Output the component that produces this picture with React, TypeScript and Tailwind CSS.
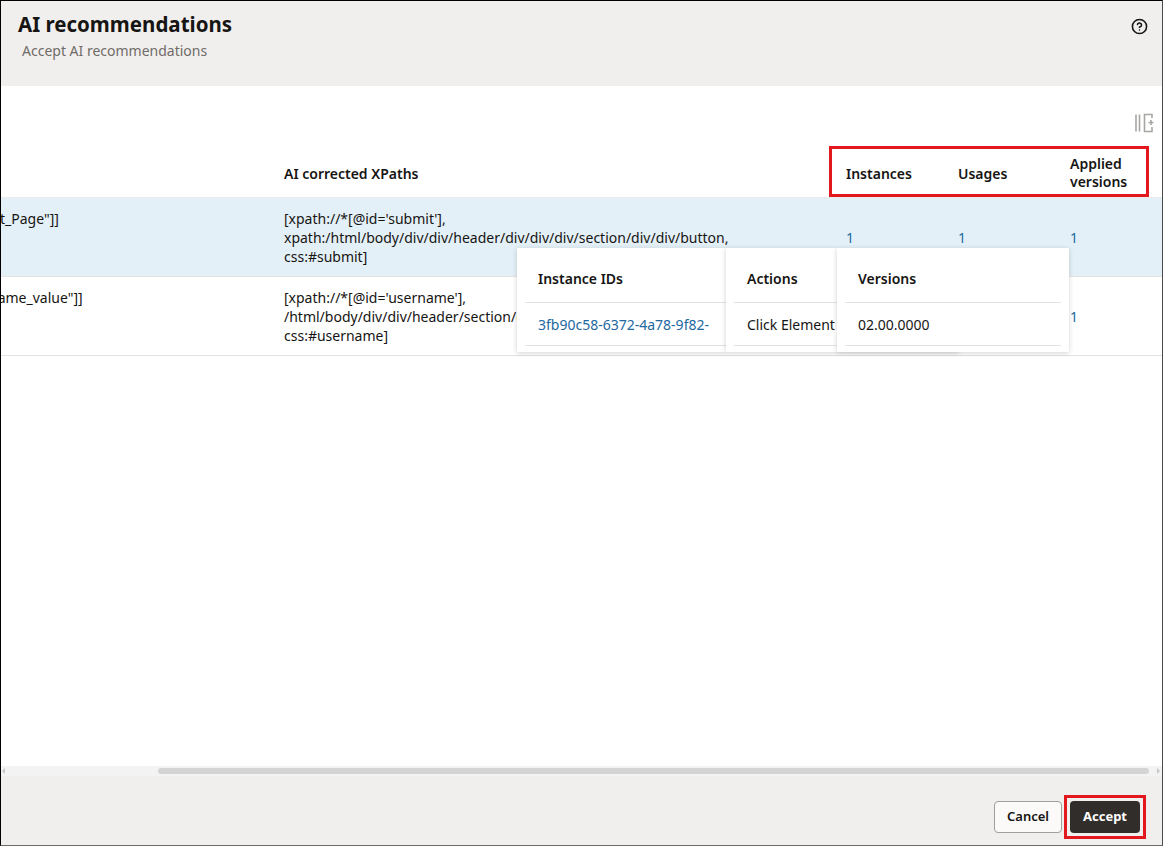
import { CircleHelp } from 'lucide-react'

interface Row {
  original: string
  originalOffset: string
  corrected: string[]
  instances: number
  usages: number
  versions: number
  selected?: boolean
}

const rows: Row[] = [
  {
    original: 't_Page"]]',
    originalOffset: 'ml-[-1px]',
    corrected: [
      "[xpath://*[@id='submit'],",
      'xpath:/html/body/div/div/header/div/div/div/section/div/div/button,',
      'css:#submit]',
    ],
    instances: 1,
    usages: 1,
    versions: 1,
    selected: true,
  },
  {
    original: 'name_value"]]',
    originalOffset: 'ml-[-12px]',
    corrected: [
      "[xpath://*[@id='username'],",
      '/html/body/div/div/header/section/div/div/form/input,',
      'css:#username]',
    ],
    instances: 1,
    usages: 1,
    versions: 1,
  },
]

function ColumnsIcon() {
  return (
    <svg width="22" height="20" viewBox="0 0 22 20" fill="none" stroke="#a8a6a3" strokeWidth={1.6}>
      <path d="M2 1.5v17M5.5 1.5v17" />
      <path d="M18 5V1.5H10.5v17H18V14" />
      <path d="M14.5 9.5h5M17 7v5" />
    </svg>
  )
}

function Popup({ title, value, link, className }: { title: string; value: string; link?: boolean; className: string }) {
  return (
    <div className={`absolute top-[162px] h-[104px] bg-white pl-2 overflow-hidden shadow-[0_1px_5px_rgba(0,0,0,0.18)] ${className}`}>
      <div className="h-[55px] flex items-center px-[13px] pt-[6px] border-b border-[#e4e3e1] text-[14px] font-semibold text-[#161513] whitespace-nowrap">
        {title}
      </div>
      <div
        className={`h-[43px] flex items-center px-[13px] border-b border-[#e4e3e1] text-[14px] whitespace-nowrap overflow-hidden ${
          link ? 'text-[#22689f]' : 'text-[#161513]'
        }`}
      >
        {value}
      </div>
    </div>
  )
}

export default function App() {
  return (
    <div
      className="w-[1163px] h-[846px] flex flex-col border-l border-t border-black border-r border-r-[#4a4a4a] border-b border-b-[#6b6b6b] overflow-hidden text-[#161513]"
      style={{ fontFamily: '"Noto Sans", "Open Sans", sans-serif' }}
    >
      {/* Header */}
      <div className="h-[85px] shrink-0 bg-[#f1efed] flex justify-between pl-[17px] pr-[14px]">
        <div className="pt-[9px]">
          <h1 className="text-[20.5px] leading-[28px] font-bold text-[#161513]">AI recommendations</h1>
          <p className="mt-[3px] ml-[4px] text-[14px] leading-[20px] text-[#6f6c69]">Accept AI recommendations</p>
        </div>
        <div className="pt-[17px]">
          <CircleHelp size={17} strokeWidth={2.2} className="text-[#161513]" />
        </div>
      </div>

      {/* Body */}
      <div className="h-[680px] shrink-0 bg-white relative overflow-hidden">
        <div className="h-[62px] flex justify-end items-start pt-[27px] pr-[6px]">
          <ColumnsIcon />
        </div>

        {/* Table header */}
        <div className="grid grid-cols-[283px_562px_112px_112px_1fr] h-[50px] items-center text-[14px] font-semibold leading-[18px] border-b border-[#ecebea]">
          <div />
          <div className="pt-[2px]">AI corrected XPaths</div>
          <div className="pt-[2px]">Instances</div>
          <div className="pt-[2px]">Usages</div>
          <div className="pt-[1px]">
            Applied
            <br />
            versions
          </div>
        </div>

        {/* Rows */}
        {rows.map((r, i) => (
          <div
            key={i}
            className={`grid grid-cols-[283px_562px_112px_112px_1fr] h-[79px] border-b border-[#e4e3e1] text-[14px] leading-[19px] ${
              r.selected ? 'bg-[#e4f0f7]' : 'bg-white'
            }`}
          >
            <div className="overflow-hidden pt-[11px] whitespace-nowrap">
              <div className={r.originalOffset}>{r.original}</div>
            </div>
            <div className="pt-[11px] whitespace-nowrap">
              {r.corrected.map((line) => (
                <div key={line}>{line}</div>
              ))}
            </div>
            <div className="self-center text-[#22689f]">{r.instances}</div>
            <div className="self-center text-[#22689f]">{r.usages}</div>
            <div className="self-center text-[#22689f]">{r.versions}</div>
          </div>
        ))}

        {/* Popups */}
        <Popup className="left-[516px] w-[209px] z-10" title="Instance IDs" value="3fb90c58-6372-4a78-9f82-" link />
        <Popup className="left-[725px] w-[111px] z-20" title="Actions" value="Click Element" />
        <div className="absolute left-[836px] top-[262px] w-[122px] h-[4px] shadow-[0_1px_4px_rgba(0,0,0,0.15)] z-10" />
        <Popup className="left-[836px] w-[232px] z-30 pr-2" title="Versions" value="02.00.0000" />

        {/* Highlight box */}
        <div className="absolute left-[828px] top-[60px] w-[320px] h-[51px] border-[3px] border-[#e3181f] pointer-events-none" />
      </div>

      {/* Scrollbar */}
      <div className="h-[10px] shrink-0 bg-[#f3f3f3] flex items-center">
        <span className="w-[3px] h-[6px] ml-[1px] bg-[#c8c8c8] [clip-path:polygon(0_50%,100%_0,100%_100%)]" />
        <div className="ml-[153px] mr-[8px] flex-1 h-[6px] rounded-full bg-[#d4d4d4]" />
        <span className="w-[3px] h-[6px] mr-[2px] bg-[#c8c8c8] [clip-path:polygon(0_0,100%_50%,0_100%)]" />
      </div>

      {/* Footer */}
      <div className="flex-1 bg-[#f1efed] flex justify-end items-start pt-[19px] pr-[16px] gap-[2px]">
        <button
          type="button"
          className="mt-[6px] h-[32px] w-[68px] rounded-[4px] border border-[#a19e9b] bg-[#fbfaf9] text-[13px] font-semibold text-[#161513]"
        >
          Cancel
        </button>
        <span className="border-[3px] border-[#e3181f] p-[3px]">
          <button
            type="button"
            className="block h-[32px] w-[70px] rounded-[4px] bg-[#312d2a] text-[13px] font-bold text-white"
          >
            Accept
          </button>
        </span>
      </div>
    </div>
  )
}
